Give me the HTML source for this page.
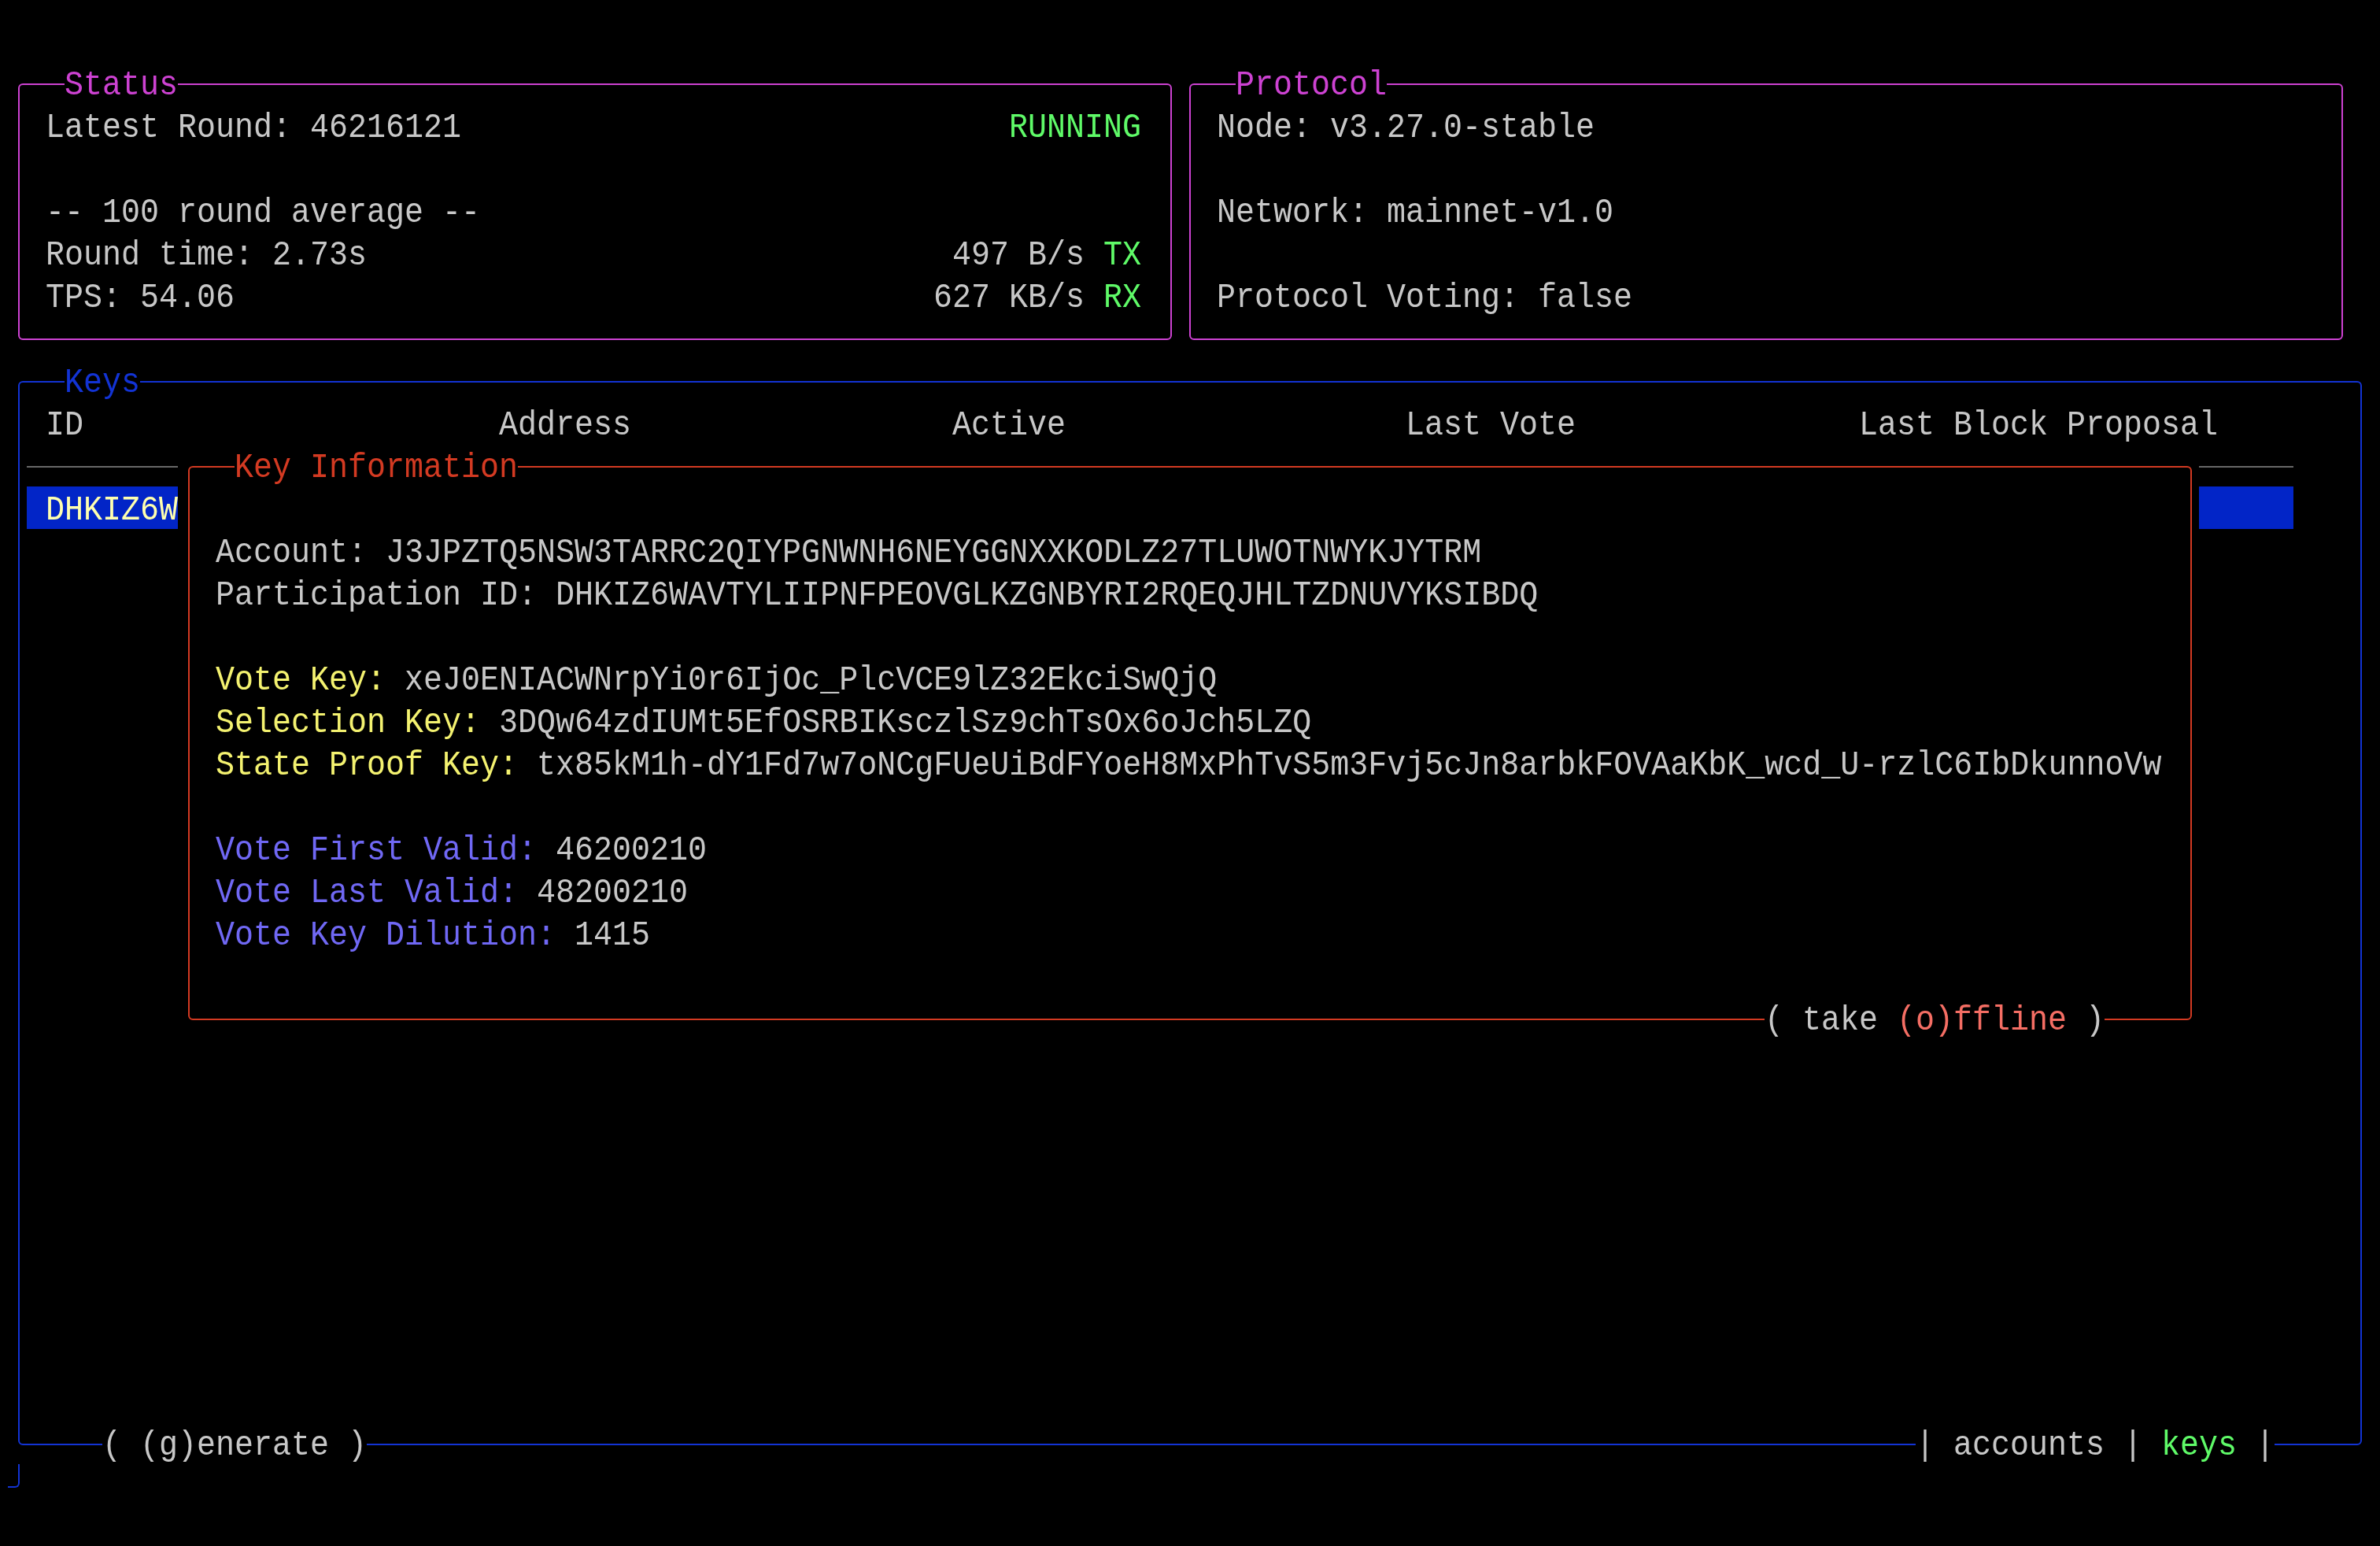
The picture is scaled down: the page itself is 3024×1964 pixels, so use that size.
<!DOCTYPE html>
<html><head><meta charset="utf-8"><title>TUI</title><style>
html,body{margin:0;padding:0;background:#000;}
body{width:3024px;height:1964px;position:relative;overflow:hidden;font-family:"Liberation Mono",monospace;font-size:40px;color:#c7c7c7;}
.tx{position:absolute;white-space:pre;line-height:54px;height:54px;transform-origin:0 37px;transform:scaleY(1.13);will-change:transform;}
.bg span,.bg{background:#000;}
.box{position:absolute;border:2px solid;border-radius:6px;box-sizing:border-box;}
.rect{position:absolute;}
</style></head>
<body>
<div class="box" style="left:23px;top:106px;width:1466px;height:326px;border-color:#cd42d2;"></div>
<div class="tx bg" style="left:82px;top:83px"><span style="color:#cd42d2">Status</span></div>
<div class="tx" style="left:58px;top:137px">Latest Round: 46216121</div>
<div class="tx" style="left:1282px;top:137px"><span style="color:#5ffa68">RUNNING</span></div>
<div class="tx" style="left:58px;top:245px">-- 100 round average --</div>
<div class="tx" style="left:58px;top:299px">Round time: 2.73s</div>
<div class="tx" style="left:1210px;top:299px">497 B/s <span style="color:#5ffa68">TX</span></div>
<div class="tx" style="left:58px;top:353px">TPS: 54.06</div>
<div class="tx" style="left:1186px;top:353px">627 KB/s <span style="color:#5ffa68">RX</span></div>
<div class="box" style="left:1511px;top:106px;width:1466px;height:326px;border-color:#cd42d2;"></div>
<div class="tx bg" style="left:1570px;top:83px"><span style="color:#cd42d2">Protocol</span></div>
<div class="tx" style="left:1546px;top:137px">Node: v3.27.0-stable</div>
<div class="tx" style="left:1546px;top:245px">Network: mainnet-v1.0</div>
<div class="tx" style="left:1546px;top:353px">Protocol Voting: false</div>
<div class="box" style="left:23px;top:484px;width:2978px;height:1352px;border-color:#1233d4;"></div>
<div class="tx bg" style="left:82px;top:461px"><span style="color:#1233d4">Keys</span></div>
<div class="tx" style="left:58px;top:515px">ID</div>
<div class="tx" style="left:634px;top:515px">Address</div>
<div class="tx" style="left:1210px;top:515px">Active</div>
<div class="tx" style="left:1786px;top:515px">Last Vote</div>
<div class="tx" style="left:2362px;top:515px">Last Block Proposal</div>
<div class="rect" style="left:34px;top:592px;width:2880px;height:2px;background:#686868"></div>
<div class="rect" style="left:34px;top:618px;width:2880px;height:54px;background:#0225c7"></div>
<div class="tx" style="left:58px;top:623px"><span style="color:#ffffaf">DHKIZ6W</span></div>
<div class="tx bg" style="left:130px;top:1811px">( (g)enerate )</div>
<div class="tx bg" style="left:2434px;top:1811px">| accounts | <span style="color:#5ffa68">keys</span> |</div>
<div class="rect" style="left:10px;top:1860px;width:15px;height:30px;border-right:2px solid #1233d4;border-bottom:2px solid #1233d4;border-bottom-right-radius:6px;box-sizing:border-box"></div>
<div class="rect" style="left:226px;top:564px;width:2568px;height:756px;background:#000"></div>
<div class="box" style="left:239px;top:592px;width:2546px;height:704px;border-color:#d33a22;"></div>
<div class="tx bg" style="left:298px;top:569px"><span style="color:#d33a22">Key Information</span></div>
<div class="tx" style="left:274px;top:677px">Account: J3JPZTQ5NSW3TARRC2QIYPGNWNH6NEYGGNXXKODLZ27TLUWOTNWYKJYTRM</div>
<div class="tx" style="left:274px;top:731px">Participation ID: DHKIZ6WAVTYLIIPNFPEOVGLKZGNBYRI2RQEQJHLTZDNUVYKSIBDQ</div>
<div class="tx" style="left:274px;top:839px"><span style="color:#f4f270">Vote Key:</span> xeJ0ENIACWNrpYi0r6IjOc_PlcVCE9lZ32EkciSwQjQ</div>
<div class="tx" style="left:274px;top:893px"><span style="color:#f4f270">Selection Key:</span> 3DQw64zdIUMt5EfOSRBIKsczlSz9chTsOx6oJch5LZQ</div>
<div class="tx" style="left:274px;top:947px"><span style="color:#f4f270">State Proof Key:</span> tx85kM1h-dY1Fd7w7oNCgFUeUiBdFYoeH8MxPhTvS5m3Fvj5cJn8arbkFOVAaKbK_wcd_U-rzlC6IbDkunnoVw</div>
<div class="tx" style="left:274px;top:1055px"><span style="color:#7068f4">Vote First Valid:</span> 46200210</div>
<div class="tx" style="left:274px;top:1109px"><span style="color:#7068f4">Vote Last Valid:</span> 48200210</div>
<div class="tx" style="left:274px;top:1163px"><span style="color:#7068f4">Vote Key Dilution:</span> 1415</div>
<div class="tx bg" style="left:2242px;top:1271px">( take <span style="color:#f56e64">(o)ffline</span> )</div>
</body></html>
